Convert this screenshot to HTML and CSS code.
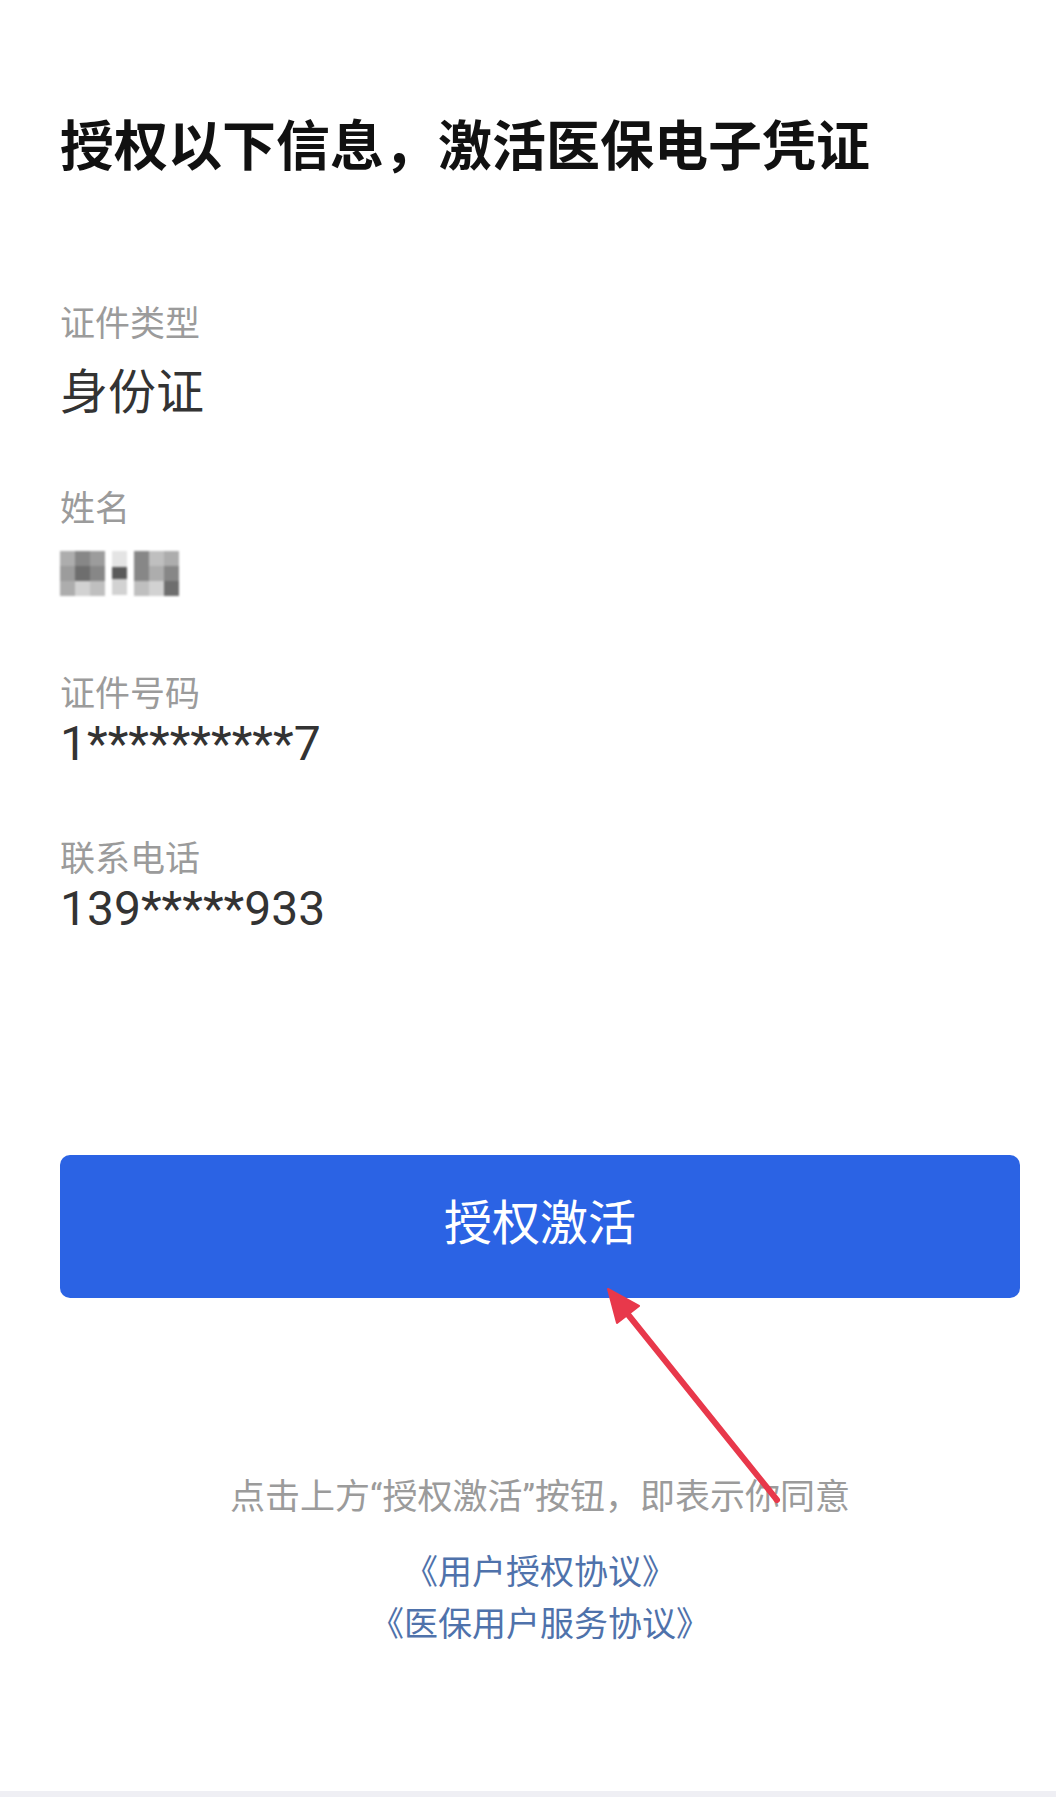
FILE: index.html
```html
<!DOCTYPE html>
<html lang="zh-CN">
<head>
<meta charset="utf-8">
<title>授权激活</title>
<link rel="stylesheet" href="styles.css">
</head>
<body>
<main class="page">
  <h1 class="title">授权以下信息，激活医保电子凭证</h1>

  <section class="fields">
    <div class="field">
      <div class="label">证件类型</div>
      <div class="value cjk">身份证</div>
    </div>
    <div class="field">
      <div class="label">姓名</div>
      <div class="value cjk mosaic-row" aria-label="姓名（已打码）">
        <div class="glyph g3">
          <span class="s5"></span><span class="s3"></span><span class="s4"></span>
          <span class="s4"></span><span class="s2"></span><span class="s3"></span>
          <span class="s5"></span><span class="s7"></span><span class="s6"></span>
        </div>
        <div class="glyph g-dot">
          <span class="s8"></span>
          <span class="s1"></span>
          <span class="s7"></span>
        </div>
        <div class="glyph g3">
          <span class="s3"></span><span class="s6"></span><span class="s5"></span>
          <span class="s3"></span><span class="s5"></span><span class="s3"></span>
          <span class="s6"></span><span class="s7"></span><span class="s2"></span>
        </div>
      </div>
    </div>
    <div class="field">
      <div class="label">证件号码</div>
      <div class="value num">1**********7</div>
    </div>
    <div class="field">
      <div class="label">联系电话</div>
      <div class="value num">139*****933</div>
    </div>
  </section>

  <button class="activate" type="button">授权激活</button>

  <p class="notice">点击上方“授权激活”按钮，即表示你同意</p>
  <div class="links">
    <a class="link" href="#">《用户授权协议》</a>
    <a class="link" href="#">《医保用户服务协议》</a>
  </div>
</main>
<div class="bottom-strip"></div>

<svg class="annotation" width="1056" height="1797" viewBox="0 0 1056 1797" aria-hidden="true">
  <line x1="777" y1="1500" x2="626" y2="1312" stroke="#e8384b" stroke-width="6" stroke-linecap="round"/>
  <polygon points="608,1289 639,1306 617,1323" fill="#e8384b" stroke="#e8384b" stroke-width="2" stroke-linejoin="round"/>
</svg>
</body>
</html>
```

FILE: styles.css
```css
* {
  box-sizing: border-box;
}

html, body {
  margin: 0;
  padding: 0;
}

body {
  position: relative;
  width: 1056px;
  background: #efeff4;
  font-family: "Noto Sans CJK SC", "Noto Sans", sans-serif;
  color: #333;
}

.page {
  height: 1791px;
  background: #ffffff;
  padding: 111px 36px 0 60px;
  display: flex;
  flex-direction: column;
}

.title {
  margin: 0;
  font-size: 54px;
  line-height: 64px;
  font-weight: 700;
  color: #111;
  white-space: nowrap;
}

.fields {
  margin-top: 122px;
  display: flex;
  flex-direction: column;
  gap: 64px;
}

.field {
  display: flex;
  flex-direction: column;
}

.label {
  font-size: 35px;
  line-height: 48px;
  color: #9b9b9b;
}

.value {
  color: #333;
}

.value.cjk {
  font-size: 48px;
  line-height: 60px;
  height: 60px;
  margin-top: 13px;
}

.value.num {
  font-family: Roboto, "Noto Sans CJK SC", sans-serif;
  font-size: 48px;
  line-height: 48px;
  margin-top: 5px;
}

.mosaic-row {
  display: flex;
  align-items: center;
  gap: 6px;
  filter: blur(1px);
}

.glyph {
  display: grid;
}

.glyph.g3 {
  grid-template-columns: repeat(3, 15px);
  grid-template-rows: repeat(3, 15px);
}

.glyph.g-dot {
  grid-template-columns: 15px;
  grid-template-rows: 16px 12px 16px;
  margin: 0 1px;
}

.glyph span {
  display: block;
}

.s1 { background: #5a5a5a; }
.s2 { background: #6e6e6e; }
.s3 { background: #878787; }
.s4 { background: #9c9c9c; }
.s5 { background: #adadad; }
.s6 { background: #bfbfbf; }
.s7 { background: #d2d2d2; }
.s8 { background: #e4e4e4; }

.activate {
  margin-top: 222px;
  width: 960px;
  height: 143px;
  border: 0;
  border-radius: 10px;
  background: #2b63e4;
  color: #ffffff;
  font-family: "Noto Sans CJK SC", sans-serif;
  font-size: 48px;
  line-height: 60px;
  padding: 0 0 15px;
  cursor: pointer;
}

.notice {
  margin: 176px 0 0;
  width: 960px;
  text-align: center;
  font-family: Roboto, "Noto Sans CJK SC", sans-serif;
  font-size: 35px;
  line-height: 48px;
  color: #9b9b9b;
}

.links {
  margin-top: 22px;
  width: 960px;
  display: flex;
  flex-direction: column;
  align-items: center;
}

.link {
  font-size: 34px;
  line-height: 52px;
  color: #4f72ab;
  text-decoration: none;
}

.bottom-strip {
  height: 6px;
  background: #efeff4;
}

.annotation {
  position: absolute;
  top: 0;
  left: 0;
  pointer-events: none;
}
```
